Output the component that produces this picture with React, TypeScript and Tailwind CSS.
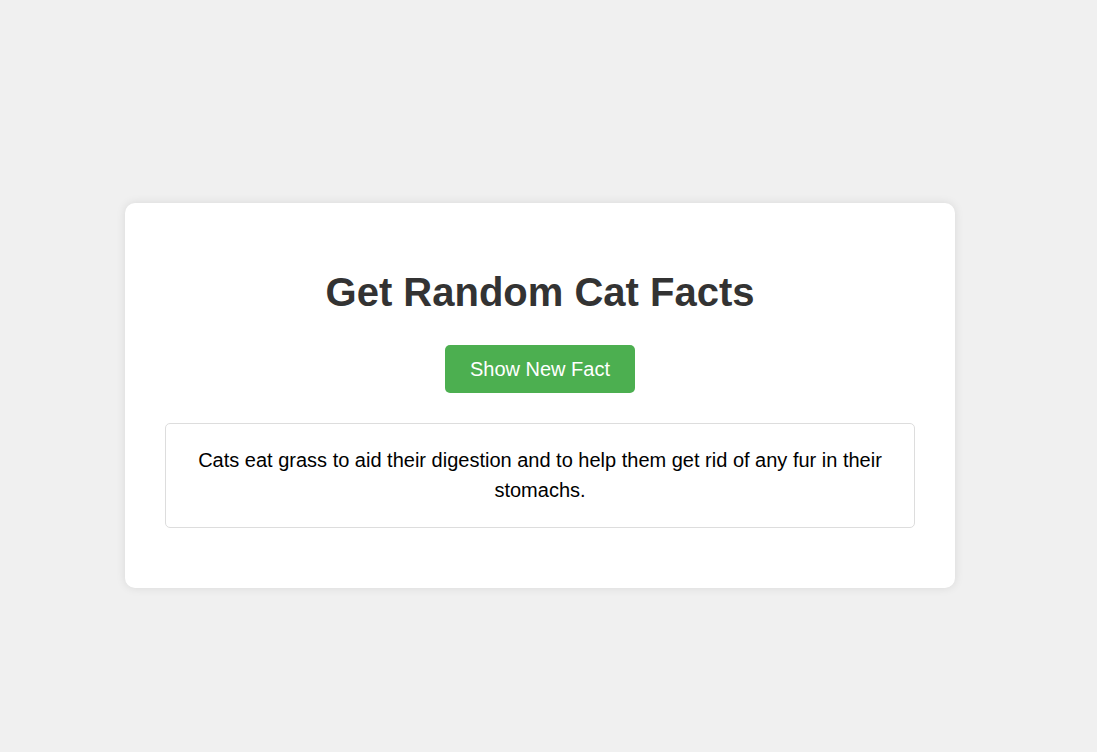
export default function App() {
  return (
    <div className="min-h-[752px] w-full bg-[#f0f0f0] pl-[125px] pt-[203px] font-['Liberation_Sans',Arial,sans-serif]">
      <div className="flex w-[830px] flex-col items-center rounded-[10px] bg-white px-[40px] pb-[60px] pt-[66px] shadow-[0_0_10px_rgba(0,0,0,0.1)]">
        <h1 className="text-[40px] font-bold leading-[46px] text-[#333]">Get Random Cat Facts</h1>
        <button className="mt-[30px] h-[48px] w-[190px] rounded-[5px] bg-[#4caf50] text-[20px] leading-[23px] text-white">
          Show New Fact
        </button>
        <div className="mt-[30px] w-full rounded-[5px] border border-[#ddd] px-[20px] pb-[22.5px] pt-[20.5px] text-center text-[20px] leading-[30px] text-black">
          Cats eat grass to aid their digestion and to help them get rid of any fur in their stomachs.
        </div>
      </div>
    </div>
  )
}
